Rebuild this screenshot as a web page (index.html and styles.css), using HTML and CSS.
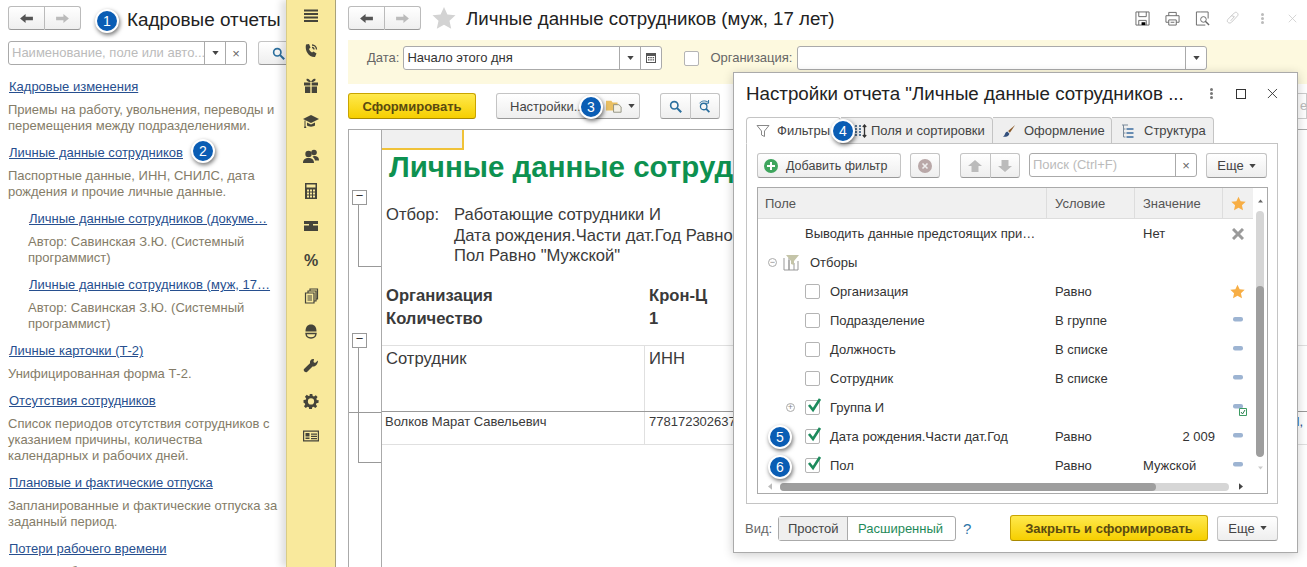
FILE: index.html
```html
<!DOCTYPE html>
<html>
    <head>
        <meta charset="UTF-8">
        <title>Личные данные сотрудников</title>
        <link rel="stylesheet" href="styles.css">
    </head>
    <body>
        <svg class="sprites" width="0" height="0">
            <symbol id="arrow-left" viewBox="0 0 16 12"><path d="M1 6l6-5v3h8v4H7v3z"/></symbol>
            <symbol id="arrow-right" viewBox="0 0 16 12"><path d="M15 6L9 1v3H1v4h8v3z"/></symbol>
            <symbol id="caret" viewBox="0 0 8 5"><path d="M0 0h8L4 5z"/></symbol>
            <symbol id="loupe" viewBox="0 0 16 16"><circle cx="6.5" cy="6.5" r="4.5" fill="none" stroke="currentColor" stroke-width="2"/><path d="M10 10l5 5" stroke="currentColor" stroke-width="2.6"/></symbol>
            <symbol id="star" viewBox="0 0 24 24"><path d="M12 1l3.4 7.4 8.1.9-6 5.5 1.7 8L12 18.7 4.800 22.800l1.700-8-6-5.500 8.100-.9z"/></symbol>
            <symbol id="dash" viewBox="0 0 10 5"><rect width="10" height="4.500" rx="2" fill="#9db4d2"/></symbol>
            <symbol id="tick" viewBox="0 0 16 16"><path d="M3 7l4 5 7-11" fill="none" stroke="#1c8a5c" stroke-width="2.600"/></symbol>
        </svg>

        <div class="page">
            <div class="side">
                <div class="side-top">
                    <div class="nav-pair">
                        <span class="nav-btn"><svg class="arrow-on"><use href="#arrow-left"/></svg></span>
                        <span class="nav-btn"><svg class="arrow-off"><use href="#arrow-right"/></svg></span>
                    </div>
                    <h1 class="side-title">Кадровые отчеты</h1>
                </div>
                <div class="side-search">
                    <div class="field side-field">
                        <span class="field-text placeholder">Наименование, поле или авто...</span>
                        <span class="field-btn"><svg class="caret"><use href="#caret"/></svg></span>
                        <span class="field-btn clear">×</span>
                    </div>
                    <span class="btn side-find"><svg class="loupe"><use href="#loupe"/></svg></span>
                </div>
                <div class="report-list">
                    <a class="link">Кадровые изменения</a>
                    <p class="desc">Приемы на работу, увольнения, переводы и<br>перемещения между подразделениями.</p>
                    <a class="link">Личные данные сотрудников</a>
                    <p class="desc">Паспортные данные, ИНН, СНИЛС, дата<br>рождения и прочие личные данные.</p>
                    <a class="link sub">Личные данные сотрудников (докуме…</a>
                    <p class="desc sub">Автор: Савинская З.Ю. (Системный<br>программист)</p>
                    <a class="link sub">Личные данные сотрудников (муж, 17…</a>
                    <p class="desc sub">Автор: Савинская З.Ю. (Системный<br>программист)</p>
                    <a class="link">Личные карточки (Т-2)</a>
                    <p class="desc">Унифицированная форма Т-2.</p>
                    <a class="link">Отсутствия сотрудников</a>
                    <p class="desc">Список периодов отсутствия сотрудников с<br>указанием причины, количества<br>календарных и рабочих дней.</p>
                    <a class="link">Плановые и фактические отпуска</a>
                    <p class="desc">Запланированные и фактические отпуска за<br>заданный период.</p>
                    <a class="link">Потери рабочего времени</a>
                    <p class="desc">Потери рабочего времени.</p>
                </div>
            </div>

            <div class="rail">
                <svg class="rail-icon" viewBox="0 0 16 16"><path d="M1 1.500h14v2H1zM1 5h14v2H1zM1 8.500h14v2H1zM1 12h14v2H1z"/></svg>
                <svg class="rail-icon" viewBox="0 0 16 16"><path d="M3 1.500l3-.5 1.500 3.500-1.500 1.500c.5 1.500 1.500 2.800 3 3.500l1.500-1 3 2-1.500 3.500C6 14.500 1.500 8 3 1.500z"/><path d="M9 2c2.500 0 4.500 2 4.500 4.500M9 4.500c1.200 0 2 .8 2 2" fill="none" stroke="currentColor" stroke-width="1.300"/></svg>
                <svg class="rail-icon" viewBox="0 0 16 16"><path d="M1 4.500h6.300v3H1zM8.700 4.500H15v3H8.700zM2 8.500h5.300V15H2zM8.700 8.500H14V15H8.700zM3.500 1c1.500-1 3.500.5 4.500 3h-2C5 3.500 3 3 3.500 1zM12.500 1c-1.500-1-3.500.5-4.500 3h2c1-.5 3-1 2.500-3z"/></svg>
                <svg class="rail-icon" viewBox="0 0 16 16"><path d="M8 2L0 6l8 4 8-4zM4 9.500v3c2 1.500 6 1.500 8 0v-3l-4 2zM1.500 7.500h1V13l1 2H1l.5-2z"/></svg>
                <svg class="rail-icon" viewBox="0 0 16 16"><circle cx="5.500" cy="6" r="3.200"/><circle cx="11" cy="4.500" r="2.800"/><path d="M0 15c0-3.500 2-5 5.500-5s5.500 1.500 5.500 5zM11 8c3 0 5 1 5 4.500h-4c-.3-2-1.500-3-2.500-3.800z"/></svg>
                <svg class="rail-icon" viewBox="0 0 16 16"><path fill-rule="evenodd" d="M2 0h12v16H2zM3.500 1.500v3h9v-3zM4 6.500v2h2v-2zM7 6.500v2h2v-2zM10 6.500v2h2v-2zM4 9.500v2h2v-2zM7 9.500v2h2v-2zM10 9.500v2h2v-2zM4 12.500v2h2v-2zM7 12.500v2h2v-2zM10 12.500v2h2v-2z"/></svg>
                <svg class="rail-icon" viewBox="0 0 16 16"><path d="M1 3h14v3H10v1.500h5V13H1V7.500h5V6H1z"/></svg>
                <span class="rail-percent">%</span>
                <svg class="rail-icon" viewBox="0 0 16 16"><path fill="none" stroke="currentColor" stroke-width="1.200" d="M2.500 5h8.500v10H2.500zM5 5V3h8v10h-2M7 3V1h7.500v10H13M4.500 8h4.500M4.500 10h4.500M4.500 12h4.500"/></svg>
                <svg class="rail-icon" viewBox="0 0 16 16"><path d="M2.500 8.500C2.500 4 4.500 1.500 8 1.500s5.500 2.500 5.500 7z"/><path fill="none" stroke="currentColor" stroke-width="1.400" d="M3 10.500c.5 6 9.500 6 10 0z"/></svg>
                <svg class="rail-icon" viewBox="0 0 16 16"><path d="M15 2.500l-3 2.500-1.500-1 .5-3c-2.500-.5-4.500 1.500-4 4.200L1 11c-1 1 .5 4 3 3l5.500-5.500c3 .5 5.500-2.500 5.500-6z"/></svg>
                <svg class="rail-icon" viewBox="-1 -1 18 18"><path fill-rule="evenodd" d="M6.500 0h3l.4 2.400 1.500.6 2-1.400 2 2-1.400 2 .6 1.500L16.500 7v3l-2.400.4-.6 1.500 1.400 2-2 2-2-1.400-1.500.6-.4 2.400h-3l-.4-2.400-1.500-.6-2 1.400-2-2 1.400-2-.6-1.500L-.4 10V7l2.400-.4.6-1.500-1.400-2 2-2 2 1.400 1.500-.6zM8 5a3.500 3.500 0 100 7 3.500 3.500 0 000-7z"/></svg>
                <svg class="rail-icon" viewBox="0 0 16 16"><path fill-rule="evenodd" d="M0 2.500h16v11H0zM1.200 3.700v8.600h13.600V3.700zM2.500 5h4v3.500h-4zM2.500 9.500h4V11h-4zM8 5.500h6v1.200H8zM8 7.800h6V9H8zM8 10h6v1.200H8z"/></svg>
            </div>

            <div class="main">
                <div class="main-top">
                    <div class="nav-pair">
                        <span class="nav-btn"><svg class="arrow-on"><use href="#arrow-left"/></svg></span>
                        <span class="nav-btn"><svg class="arrow-off"><use href="#arrow-right"/></svg></span>
                    </div>
                    <svg class="title-star"><use href="#star"/></svg>
                    <h1 class="main-title">Личные данные сотрудников (муж, 17 лет)</h1>
                    <div class="tools">
                        <svg class="tool" viewBox="0 0 16 16"><path fill="none" stroke="currentColor" d="M1 1h14v14H1zM4 1v5h8V1M4 15v-5h8v5"/><path d="M7 12h4v3H7z"/></svg>
                        <svg class="tool" viewBox="0 0 16 16"><path fill="none" stroke="currentColor" d="M4 5V1.500h8V5M1 12V5h14v7h-3M4 12H1M4 9.500h8v5.500H4zM6 12h4"/></svg>
                        <svg class="tool" viewBox="0 0 16 16"><path fill="none" stroke="currentColor" d="M6 1H1.500v14H11M6 1h8v7"/><circle cx="9" cy="9" r="3" fill="none" stroke="currentColor"/><path d="M11 11l4 4" stroke="currentColor" stroke-width="1.500"/></svg>
                        <svg class="tool pale" viewBox="0 0 16 16"><path fill="none" stroke="currentColor" d="M6 6l4-4c2-2 5 1 3.500 3L7 12c-2 2-6 0-4-3l4-4 3 1-4 4.500"/></svg>
                        <span class="dots pale-dots"><i></i><i></i><i></i></span>
                        <svg class="tool pale cross" viewBox="0 0 12 12"><path fill="none" stroke="currentColor" d="M1 1l10 10M11 1L1 11"/></svg>
                    </div>
                </div>

                <div class="filter-bar">
                    <span class="filter-label">Дата:</span>
                    <div class="field date-field">
                        <span class="field-text">Начало этого дня</span>
                        <span class="field-btn"><svg class="caret"><use href="#caret"/></svg></span>
                        <span class="field-btn">
                            <svg class="calendar" viewBox="0 0 12 12"><path fill="#555" fill-rule="evenodd" d="M1 1h10v10H1zM2 4v6h8V4zM3 5h1.500v1.200H3zM5.300 5h1.500v1.200H5.300zM7.600 5h1.500v1.200H7.600zM3 7.300h1.500v1.200H3zM5.300 7.300h1.500v1.200H5.300zM7.600 7.300h1.500v1.200H7.600z"/></svg>
                        </span>
                    </div>
                    <span class="check org-check"></span>
                    <span class="filter-label org-label">Организация:</span>
                    <div class="field org-field">
                        <span class="field-text"></span>
                        <span class="field-btn"><svg class="caret"><use href="#caret"/></svg></span>
                    </div>
                </div>

                <div class="action-bar">
                    <span class="btn-yellow make-btn">Сформировать</span>
                    <span class="btn settings-btn">
                        Настройки...
                        <svg class="folder" viewBox="0 0 18 16"><path fill="#e9bf62" d="M0 2h6l1.500 2H13v9H0z"/><path fill="#f4f1e6" stroke="#8c8c7a" d="M8.500 6.500h6l2.500 2.500v6H8.500z"/></svg>
                        <svg class="caret"><use href="#caret"/></svg>
                    </span>
                    <div class="btn-pair">
                        <span class="btn pair-btn"><svg class="loupe small"><use href="#loupe"/></svg></span>
                        <span class="btn pair-btn">
                            <svg class="loupe small" viewBox="0 0 16 16"><circle cx="7" cy="8" r="4" fill="none" stroke="currentColor" stroke-width="1.600"/><path d="M10 11l4 4" stroke="currentColor" stroke-width="2.200"/><path d="M2 4c2-3 7-4 11-1M13 0v4h-4" fill="none" stroke="currentColor" stroke-width="1.200"/></svg>
                        </span>
                    </div>
                    <div class="stub-field">е</div>
                </div>

                <div class="report">
                    <div class="gutter">
                        <span class="outline outline-a"></span>
                        <span class="outline outline-b"></span>
                    </div>
                    <div class="sheet">
                        <div class="corner"></div>
                        <div class="sheet-title">Личные данные сотрудников</div>
                        <div class="sheet-filter">
                            <span>Отбор:</span>
                            <div>
                                <div>Работающие сотрудники И</div>
                                <div>Дата рождения.Части дат.Год Равно</div>
                                <div>Пол Равно "Мужской"</div>
                            </div>
                        </div>
                        <div class="sheet-totals">
                            <div class="sheet-line"><span>Организация</span><span>Крон-Ц</span></div>
                            <div class="sheet-line"><span>Количество</span><span>1</span></div>
                        </div>
                        <div class="sheet-head"><span>Сотрудник</span><span>ИНН</span></div>
                        <div class="sheet-row"><span>Волков Марат Савельевич</span><span>778172302637</span><span class="row-tail">l,</span></div>
                    </div>
                </div>
            </div>
        </div>

        <div class="dialog">
            <div class="dialog-top">
                <div class="dialog-title">Настройки отчета "Личные данные сотрудников ...</div>
                <span class="dots"><i></i><i></i><i></i></span>
                <span class="win-square"></span>
                <svg class="win-close" viewBox="0 0 12 12"><path fill="none" stroke="currentColor" d="M1 1l10 10M11 1L1 11"/></svg>
            </div>
            <div class="tabs">
                <div class="tab active">
                    <svg class="tab-icon" viewBox="0 0 14 14"><path fill="#fff" stroke="#888" d="M1 1.500h12L8.500 7v5.500l-3-1.500V7z"/></svg>
                    Фильтры
                </div>
                <div class="tab fields-tab">
                    <svg class="tab-icon" viewBox="0 0 14 14"><path fill="none" stroke="#5b7794" stroke-dasharray="2 1" stroke-width="2" d="M3 1v12M7 1v12"/><path fill="none" stroke="#333" stroke-width="1.300" d="M11.500 1v12M9.800 3l1.700-2 1.700 2M9.800 11l1.700 2 1.700-2"/></svg>
                    Поля и сортировки
                </div>
                <div class="tab design-tab">
                    <svg class="tab-icon" viewBox="0 0 16 14"><path fill="#8a5a2a" d="M15 0L7 7l2 2z"/><path fill="#33507c" d="M6 7.500l2.500 2.500c-1 3-4 4-7.500 3.500 2.500-1 2-5 5-6z"/></svg>
                    Оформление
                </div>
                <div class="tab tree-tab">
                    <svg class="tab-icon" viewBox="0 0 14 14"><path fill="none" stroke="#7a8a9a" d="M1 1h6M2.500 1v12h2M2.500 5h2M2.500 9h2"/><path stroke="#3d6da0" stroke-width="1.600" d="M5.500 5h7M5.500 9h7M5.500 13h7"/></svg>
                    Структура
                </div>
            </div>

            <div class="tab-panel">
                <div class="panel-bar">
                    <span class="btn add-btn">
                        <svg class="plus-icon" viewBox="0 0 14 14"><circle cx="7" cy="7" r="7" fill="#3ea55d"/><path stroke="#fff" stroke-width="2" d="M3 7h8M7 3v8"/></svg>
                        Добавить фильтр
                    </span>
                    <span class="btn del-btn">
                        <svg class="plus-icon" viewBox="0 0 14 14"><circle cx="7" cy="7" r="7" fill="#b9a8a8"/><path stroke="#eee" stroke-width="1.600" d="M4.500 4.500l5 5M9.500 4.500l-5 5"/></svg>
                    </span>
                    <div class="btn-pair move-pair">
                        <span class="btn pair-btn"><svg class="move" viewBox="0 0 14 12"><path d="M7 0l7 6h-3.500v6h-7V6H0z"/></svg></span>
                        <span class="btn pair-btn"><svg class="move" viewBox="0 0 14 12"><path d="M7 12l7-6h-3.500V0h-7v6H0z"/></svg></span>
                    </div>
                    <div class="field find-field">
                        <span class="field-text placeholder">Поиск (Ctrl+F)</span>
                        <span class="field-btn clear">×</span>
                    </div>
                    <span class="btn more-btn">Еще <svg class="caret"><use href="#caret"/></svg></span>
                </div>

                <div class="grid-box">
                    <div class="grid-main">
                        <div class="grid-cols">
                            <div class="grid-row grid-head">
                                <span class="cell">Поле</span>
                                <span class="cell">Условие</span>
                                <span class="cell">Значение</span>
                                <span class="cell mark"><svg class="star-mark"><use href="#star"/></svg></span>
                            </div>
                            <div class="grid-row">
                                <span class="cell name-col">Выводить данные предстоящих при…</span>
                                <span class="cell"></span>
                                <span class="cell">Нет</span>
                                <span class="cell mark"><svg class="del-mark" viewBox="0 0 12 12"><path stroke="#9a9a9a" stroke-width="3" d="M1 1l10 10M11 1L1 11"/></svg></span>
                            </div>
                            <div class="grid-row">
                                <span class="cell name-col">
                                    <span class="toggle group-toggle">−</span>
                                    <svg class="group-icon" viewBox="0 0 16 16"><path fill="none" stroke="#999" d="M1 3v12h5V3M6 5v10h5V8M11 15h4V6"/><path fill="#c4c4a8" d="M3 0h13l-5 6v4l-3-1V6z"/></svg>
                                    Отборы
                                </span>
                                <span class="cell"></span>
                                <span class="cell"></span>
                                <span class="cell mark"></span>
                            </div>
                            <div class="grid-row">
                                <span class="cell name-col lvl-check"><span class="check"></span>Организация</span>
                                <span class="cell">Равно</span>
                                <span class="cell"></span>
                                <span class="cell mark"><svg class="star-mark"><use href="#star"/></svg></span>
                            </div>
                            <div class="grid-row">
                                <span class="cell name-col lvl-check"><span class="check"></span>Подразделение</span>
                                <span class="cell">В группе</span>
                                <span class="cell"></span>
                                <span class="cell mark"><svg class="dash"><use href="#dash"/></svg></span>
                            </div>
                            <div class="grid-row">
                                <span class="cell name-col lvl-check"><span class="check"></span>Должность</span>
                                <span class="cell">В списке</span>
                                <span class="cell"></span>
                                <span class="cell mark"><svg class="dash"><use href="#dash"/></svg></span>
                            </div>
                            <div class="grid-row">
                                <span class="cell name-col lvl-check"><span class="check"></span>Сотрудник</span>
                                <span class="cell">В списке</span>
                                <span class="cell"></span>
                                <span class="cell mark"><svg class="dash"><use href="#dash"/></svg></span>
                            </div>
                            <div class="grid-row">
                                <span class="cell name-col lvl-check">
                                    <span class="toggle item-toggle">+</span>
                                    <span class="check on"><svg><use href="#tick"/></svg></span>Группа И
                                </span>
                                <span class="cell"></span>
                                <span class="cell"></span>
                                <span class="cell mark">
                                    <svg class="dash"><use href="#dash"/></svg>
                                    <svg class="mini-check" viewBox="0 0 8 8"><path fill="#fff" stroke="#3c9a62" d="M.5.5h7v7h-7z"/><path fill="none" stroke="#2a7d4e" d="M2 4l1.500 2L6 2"/></svg>
                                </span>
                            </div>
                            <div class="grid-row">
                                <span class="cell name-col lvl-check"><span class="check on"><svg><use href="#tick"/></svg></span>Дата рождения.Части дат.Год</span>
                                <span class="cell">Равно</span>
                                <span class="cell number">2 009</span>
                                <span class="cell mark"><svg class="dash"><use href="#dash"/></svg></span>
                            </div>
                            <div class="grid-row">
                                <span class="cell name-col lvl-check"><span class="check on"><svg><use href="#tick"/></svg></span>Пол</span>
                                <span class="cell">Равно</span>
                                <span class="cell">Мужской</span>
                                <span class="cell mark"><svg class="dash"><use href="#dash"/></svg></span>
                            </div>
                        </div>
                        <div class="vscroll">
                            <svg class="scroll-arrow up"><use href="#caret"/></svg>
                            <div class="vtrack"><div class="vthumb"></div></div>
                            <svg class="scroll-arrow down"><use href="#caret"/></svg>
                        </div>
                    </div>
                    <div class="hscroll">
                        <svg class="hscroll-arrow left" viewBox="0 0 5 8"><path d="M5 0v8L0 4z"/></svg>
                        <div class="htrack"><div class="hthumb"></div></div>
                        <svg class="hscroll-arrow right" viewBox="0 0 5 8"><path d="M0 0v8l5-4z"/></svg>
                    </div>
                </div>
            </div>

            <div class="dialog-foot">
                <span class="view-label">Вид:</span>
                <div class="segment">
                    <span class="seg-item current">Простой</span>
                    <span class="seg-item green">Расширенный</span>
                </div>
                <span class="help">?</span>
                <span class="btn-yellow close-btn">Закрыть и сформировать</span>
                <span class="btn more-btn foot-more">Еще <svg class="caret"><use href="#caret"/></svg></span>
            </div>
        </div>

        <span class="badge b1">1</span>
        <span class="badge b2">2</span>
        <span class="badge b3">3</span>
        <span class="badge b4">4</span>
        <span class="badge b5">5</span>
        <span class="badge b6">6</span>
    </body>
</html>
```

FILE: styles.css
```css
* {
    box-sizing: border-box;
}

html, body {
    margin: 0;
    height: 567px;
    overflow: hidden;
}

body {
    position: relative;
    background: #fff;
    font-family: "Liberation Sans", Arial, sans-serif;
    font-size: 13px;
    color: #333;
}

.sprites {
    position: absolute;
}

.page {
    display: flex;
    height: 567px;
}

/* left list of reports */
.side {
    width: 286px;
    flex: none;
    overflow: hidden;
    padding-left: 8px;
}

.side-top {
    display: flex;
    align-items: center;
    height: 40px;
    padding-bottom: 4px;
}

.side-title {
    margin: 3px 0 0 46px;
    font-size: 18.900px;
    font-weight: normal;
    color: #222;
    white-space: nowrap;
}

.nav-pair {
    display: flex;
    width: 73px;
    height: 24px;
    flex: none;
}

.nav-btn {
    flex: 1;
    display: flex;
    align-items: center;
    justify-content: center;
    border: 1px solid #bbb;
    border-bottom-color: #999;
    background: linear-gradient(#fff, #efefef);
}

.nav-btn:first-child {
    border-radius: 3px 0 0 3px;
}

.nav-btn:last-child {
    border-left: 0;
    border-radius: 0 3px 3px 0;
}

.nav-btn svg {
    width: 15px;
    height: 11px;
}

.arrow-on {
    fill: #555;
}

.arrow-off {
    fill: #bbb;
}

.side-search {
    display: flex;
    gap: 11px;
    margin-top: 1px;
}

.field {
    display: flex;
    height: 24px;
    border: 1px solid #aaa;
    border-radius: 3px;
    background: #fff;
}

.field-text {
    flex: 1;
    min-width: 0;
    padding: 0 3px;
    line-height: 22px;
    white-space: nowrap;
    overflow: hidden;
}

.placeholder {
    color: #bbb;
}

.field-btn {
    width: 21px;
    flex: none;
    display: flex;
    align-items: center;
    justify-content: center;
    border-left: 1px solid #aaa;
}

.clear {
    font-size: 13px;
    color: #666;
}

.caret {
    width: 7px;
    height: 4px;
    fill: #444;
}

.side-field {
    width: 239px;
    flex: none;
}

.btn {
    display: inline-flex;
    align-items: center;
    justify-content: center;
    height: 25px;
    border: 1px solid #c4c4c4;
    border-bottom-color: #999;
    border-radius: 3px;
    background: linear-gradient(#fff, #eee);
    color: #444;
    white-space: nowrap;
}

.side-find {
    width: 40px;
    flex: none;
    height: 24px;
}

.loupe {
    width: 13px;
    height: 13px;
    color: #2b6f9e;
}

.report-list {
    padding-top: 14px;
    line-height: 16px;
}

.link {
    display: block;
    margin: 0 0 7px 1px;
    color: #274f8f;
    text-decoration: underline;
    white-space: nowrap;
}

.desc {
    margin: 0 0 11px;
    color: #847c68;
    white-space: nowrap;
}

.link.sub {
    margin-left: 21px;
}

.desc.sub {
    margin-left: 20px;
}

/* yellow section rail */
.rail {
    position: relative;
    width: 50px;
    flex: none;
    display: flex;
    flex-direction: column;
    align-items: center;
    gap: 19px;
    padding-top: 8px;
    background: #f9e99c;
    border-left: 1px solid #d8cc88;
    border-right: 1px solid #a9a27a;
    box-shadow: -5px 0 7px rgba(0, 0, 0, 0.13);
    color: #45443a;
}

.rail-icon {
    width: 16px;
    height: 16px;
    flex: none;
    fill: currentColor;
}

.rail-percent {
    height: 16px;
    font-size: 16px;
    font-weight: bold;
    line-height: 16px;
}

/* main report form */
.main {
    flex: 1;
    min-width: 0;
    display: flex;
    flex-direction: column;
    padding-left: 12px;
    overflow: hidden;
}

.main-top {
    display: flex;
    align-items: center;
    height: 40px;
    padding-bottom: 4px;
}

.title-star {
    width: 24px;
    height: 24px;
    margin-left: 11px;
    fill: #d3d3d3;
}

.main-title {
    margin: 2px 0 0 10px;
    font-size: 18.700px;
    font-weight: normal;
    color: #222;
    white-space: nowrap;
}

.tools {
    display: flex;
    align-items: center;
    gap: 15px;
    margin-left: auto;
    padding-right: 10px;
}

.tool {
    width: 15px;
    height: 15px;
    color: #666;
}

.tool.pale {
    color: #c8c8c8;
}

.tool.cross {
    width: 9px;
    height: 9px;
    margin-left: 9px;
}

.dots {
    display: flex;
    flex-direction: column;
    gap: 1px;
}

.dots i {
    width: 3px;
    height: 3px;
    border-radius: 50%;
    background: #777;
}

.pale-dots {
    margin-left: 6px;
}

.pale-dots i {
    background: #bbb;
}

.filter-bar {
    display: flex;
    align-items: flex-start;
    height: 44px;
    padding-top: 6px;
    background: #fdf9df;
}

.filter-label {
    margin-left: 19px;
    line-height: 24px;
    color: #666;
}

.date-field {
    width: 259px;
    margin-left: 4px;
}

.calendar {
    width: 12px;
    height: 12px;
}

.check {
    position: relative;
    display: inline-block;
    width: 15px;
    height: 15px;
    flex: none;
    border: 1px solid #b4b4b4;
    border-radius: 2px;
    background: #fff;
}

.org-check {
    margin: 5px 0 0 22px;
}

.org-label {
    margin-left: 11px;
}

.org-field {
    width: 410px;
    margin-left: 5px;
}

.action-bar {
    display: flex;
    align-items: flex-start;
    height: 45px;
    padding-top: 9px;
}

.btn-yellow {
    display: inline-flex;
    align-items: center;
    justify-content: center;
    height: 26px;
    border: 1px solid #c9a400;
    border-bottom-color: #a88900;
    border-radius: 3px;
    background: linear-gradient(#ffe94d, #f6cf00);
    color: #5a4a10;
    font-weight: bold;
    white-space: nowrap;
}

.make-btn {
    width: 128px;
}

.settings-btn {
    width: 144px;
    height: 26px;
    margin-left: 20px;
    padding-left: 13px;
    justify-content: flex-start;
}

.folder {
    width: 16px;
    height: 16px;
    margin-left: 21px;
}

.settings-btn .caret {
    margin-left: 6px;
}

.btn-pair {
    display: flex;
    width: 60px;
    margin-left: 20px;
    flex: none;
}

.pair-btn {
    flex: 1;
    height: 26px;
}

.pair-btn:first-child {
    border-radius: 3px 0 0 3px;
}

.pair-btn:last-child {
    border-left: 0;
    border-radius: 0 3px 3px 0;
}

.stub-field {
    margin-left: auto;
    width: 60px;
    height: 26px;
    padding: 4px 0 0 52px;
    border: 1px solid #ccc;
    color: #bbb;
}

.report {
    flex: 1;
    display: flex;
    border-top: 1px solid #aaa;
    border-left: 1px solid #aaa;
}

.gutter {
    position: relative;
    width: 33px;
    flex: none;
    border-right: 1px solid #aaa;
}

.gutter::after {
    content: '';
    position: absolute;
    left: 0;
    right: 0;
    top: 282px;
    border-top: 1px solid #999;
}

.outline {
    position: absolute;
    left: 9px;
    width: 23px;
    border-left: 1px solid #999;
    border-bottom: 1px solid #999;
}

.outline::before {
    content: '−';
    position: absolute;
    top: -12px;
    left: -7px;
    width: 13px;
    height: 13px;
    border: 1px solid #999;
    background: #fff;
    font-size: 13px;
    line-height: 10px;
    text-align: center;
}

.outline-a {
    top: 72px;
    height: 65px;
}

.outline-b {
    top: 215px;
    height: 118px;
}

.sheet {
    flex: 1;
    min-width: 0;
    font-size: 16.600px;
    color: #3a3a3a;
    white-space: nowrap;
}

.corner {
    width: 82px;
    height: 20px;
    background: #f0f0f0;
    border-right: 2px solid #f0c238;
    border-bottom: 2px solid #f0c238;
}

.sheet-title {
    width: 351px;
    height: 34px;
    padding-left: 7px;
    overflow: hidden;
    font-size: 29.500px;
    font-weight: bold;
    line-height: 34px;
    color: #0d9150;
}

.sheet-filter {
    display: flex;
    margin-top: 21px;
    padding-left: 4px;
    line-height: 20.500px;
}

.sheet-filter > span {
    width: 68px;
    flex: none;
}

.sheet-totals {
    margin-top: 17px;
    font-weight: bold;
    line-height: 23px;
}

.sheet-line {
    display: flex;
    padding-left: 4px;
}

.sheet-line > span:first-child {
    width: 263px;
}

.sheet-head, .sheet-row {
    display: flex;
    border-bottom: 1px solid #e0e0e0;
}

.sheet-head {
    height: 67px;
    margin-top: 15px;
    border-top: 1px solid #e0e0e0;
    border-bottom-color: #999;
    padding-top: 3px;
}

.sheet-head > span, .sheet-row > span {
    padding-left: 4px;
}

.sheet-head > span:first-child, .sheet-row > span:first-child {
    width: 263px;
    flex: none;
    margin-top: -4px;
    padding: 4px 0 0 4px;
    border-right: 1px solid #e0e0e0;
}

.sheet-row {
    height: 33px;
    padding-top: 2px;
    font-size: 13px;
}

.sheet-row > span:first-child {
    margin-top: -2px;
    padding: 2px 0 0 3px;
}

.row-tail {
    margin-left: auto;
    padding-right: 4px;
    color: #274f8f;
}

/* settings dialog */
.dialog {
    position: absolute;
    left: 733px;
    top: 72px;
    width: 565px;
    height: 481px;
    padding: 0 19px 0 12px;
    border: 1px solid #aaa;
    background: #fff;
    box-shadow: 0 2px 10px rgba(0, 0, 0, 0.2);
}

.dialog-top {
    display: flex;
    align-items: center;
    height: 44px;
    padding-bottom: 3px;
}

.dialog-title {
    width: 442px;
    font-size: 18.750px;
    color: #222;
    white-space: nowrap;
    overflow: hidden;
}

.dialog-top .dots {
    margin-left: 27px;
}

.win-square {
    width: 10px;
    height: 10px;
    margin-left: 23px;
    border: 1px solid #333;
}

.win-close {
    width: 11px;
    height: 11px;
    margin-left: 21px;
    color: #333;
}

.tabs {
    display: flex;
    height: 27px;
    margin-bottom: -1px;
    position: relative;
}

.tab {
    display: flex;
    align-items: center;
    gap: 7px;
    height: 27px;
    padding-left: 9px;
    border: 1px solid #c4c4c4;
    border-left-width: 0;
    border-radius: 0 4px 0 0;
    background: #efefef;
    color: #444;
    white-space: nowrap;
}

.tab.active {
    width: 95px;
    border-left-width: 1px;
    border-radius: 4px 4px 0 0;
    border-bottom-color: #fff;
    background: #fff;
}

.fields-tab {
    width: 152px;
    padding-left: 12px;
    gap: 4px;
}

.design-tab {
    width: 119px;
    gap: 8px;
}

.tree-tab {
    width: 102px;
    gap: 9px;
}

.tab-icon {
    width: 14px;
    height: 14px;
    flex: none;
}

.tab-panel {
    width: 532px;
    height: 361px;
    padding: 9px 10px 0;
    border: 1px solid #c4c4c4;
}

.panel-bar {
    display: flex;
    align-items: flex-start;
    height: 34px;
}

.add-btn {
    width: 144px;
    justify-content: flex-start;
    gap: 8px;
    padding-left: 6px;
    font-size: 12.500px;
}

.plus-icon {
    width: 14px;
    height: 14px;
}

.del-btn {
    width: 30px;
    margin-left: 9px;
}

.move-pair {
    margin-left: 20px;
}

.pair-btn .move {
    width: 14px;
    height: 12px;
    fill: #bbb;
}

.move-pair .pair-btn {
    height: 25px;
}

.find-field {
    width: 168px;
    margin-left: 9px;
}

.more-btn {
    width: 61px;
    margin-left: 9px;
    gap: 5px;
}

.grid-box {
    width: 511px;
    height: 307px;
    border: 1px solid #aaa;
}

.grid-main {
    display: flex;
    height: 292px;
}

.grid-cols {
    width: 495px;
    flex: none;
}

.grid-row {
    display: grid;
    grid-template-columns: 288px 88px 88px 31px;
    height: 29px;
}

.grid-head {
    height: 31px;
    border-bottom: 1px solid #ddd;
    background: #f0f0f0;
    color: #555;
}

.cell {
    display: flex;
    align-items: center;
    padding-left: 9px;
    white-space: nowrap;
}

.grid-head .cell {
    padding-left: 8px;
}

.grid-head .cell:first-child {
    padding-left: 7px;
}

.grid-head .cell + .cell {
    border-left: 1px solid #ddd;
}

.number {
    justify-content: flex-end;
    padding-right: 7px;
}

.name-col {
    padding-left: 47px;
}

.lvl-check {
    position: relative;
    gap: 10px;
}

.check.on svg {
    position: absolute;
    left: 0;
    top: -3px;
    width: 16px;
    height: 16px;
}

.toggle {
    display: flex;
    align-items: center;
    justify-content: center;
    width: 9px;
    height: 9px;
    border: 1px solid #aaa;
    border-radius: 50%;
    font-size: 9px;
    line-height: 1;
    color: #888;
}

.group-toggle {
    margin-left: -37px;
    margin-right: 6px;
}

.group-icon {
    width: 16px;
    height: 16px;
    margin-right: 11px;
}

.item-toggle {
    position: absolute;
    left: 28px;
    top: 10px;
}

.grid-head .mark, .mark {
    position: relative;
    justify-content: center;
    padding-left: 0;
}

.star-mark {
    width: 15px;
    height: 15px;
    fill: #f7ae45;
}

.del-mark {
    width: 12px;
    height: 12px;
}

.dash {
    width: 10px;
    height: 5px;
    margin-bottom: 2px;
}

.mini-check {
    position: absolute;
    left: 17px;
    top: 15px;
    width: 8px;
    height: 8px;
}

.vscroll {
    width: 15px;
    display: flex;
    flex-direction: column;
    align-items: center;
    padding-top: 11px;
}

.scroll-arrow {
    width: 5px;
    height: 4px;
    flex: none;
    fill: #666;
}

.scroll-arrow.up {
    transform: rotate(180deg);
}

.scroll-arrow.down {
    margin-top: 9px;
    fill: #ccc;
}

.vtrack {
    width: 8px;
    height: 246px;
    margin-top: 8px;
    border-radius: 4px;
    background: #d6d6d6;
    overflow: hidden;
}

.vthumb {
    height: 171px;
    margin-top: 75px;
    border-radius: 4px;
    background: #9e9e9e;
}

.hscroll {
    display: flex;
    align-items: center;
    height: 13px;
    padding-left: 10px;
}

.hscroll-arrow {
    width: 4px;
    height: 7px;
    flex: none;
}

.hscroll-arrow.left {
    fill: #bbb;
}

.hscroll-arrow.right {
    margin-left: 10px;
    fill: #444;
}

.htrack {
    width: 449px;
    height: 8px;
    margin-left: 8px;
    border-radius: 4px;
    background: #d6d6d6;
}

.hthumb {
    width: 376px;
    height: 8px;
    border-radius: 4px;
    background: #9e9e9e;
}

.dialog-foot {
    display: flex;
    align-items: center;
    width: 532px;
    height: 48px;
}

.view-label {
    width: 33px;
    margin-left: -1px;
    flex: none;
    color: #666;
}

.segment {
    display: flex;
    height: 25px;
    border: 1px solid #aaa;
    border-radius: 3px;
    line-height: 23px;
}

.seg-item {
    padding: 0 9px;
    white-space: nowrap;
}

.seg-item.current {
    width: 69px;
    background: #efefef;
    border-right: 1px solid #aaa;
    color: #444;
}

.seg-item.green {
    width: 107px;
    padding: 0 10px;
    color: #1f8a5a;
}

.help {
    margin-left: 7px;
    font-size: 15px;
    color: #2d76a8;
}

.close-btn {
    width: 198px;
    margin-left: auto;
}

.foot-more {
    margin-left: 9px;
}

/* numbered callouts */
.badge {
    position: absolute;
    width: 24px;
    height: 24px;
    border: 2px solid #fff;
    border-radius: 50%;
    background: #0a5db4;
    box-shadow: 1px 2px 4px rgba(0, 0, 0, 0.55);
    color: #fff;
    font-size: 14px;
    line-height: 20px;
    text-align: center;
}

.b1 { left: 95px; top: 9px; }
.b2 { left: 191px; top: 139px; }
.b3 { left: 579px; top: 95px; }
.b4 { left: 831px; top: 119px; }
.b5 { left: 768px; top: 425px; }
.b6 { left: 768px; top: 455px; }
```
